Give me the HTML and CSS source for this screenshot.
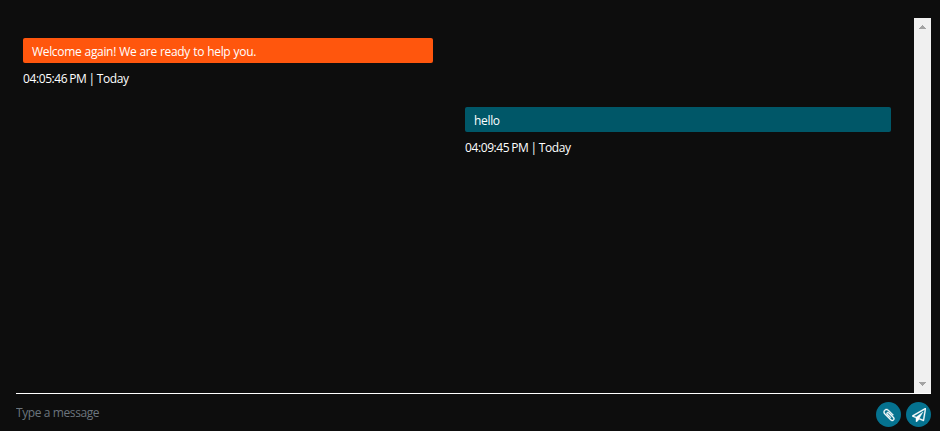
FILE: index.html
```html
<!DOCTYPE html>
<html lang="en">
<head>
<meta charset="utf-8">
<title>Chat</title>
<link rel="stylesheet" href="styles.css">
</head>
<body>
<main class="chat">
  <section class="history">
    <div class="messages">
      <article class="message incoming">
        <p class="bubble">Welcome again! We are ready to help you.</p>
        <time class="time">04:05:46 PM | Today</time>
      </article>
      <article class="message outgoing">
        <p class="bubble">hello</p>
        <time class="time">04:09:45 PM | Today</time>
      </article>
    </div>
    <div class="scrollbar">
      <svg width="7" height="4" viewBox="0 0 7 4" shape-rendering="crispEdges"><path d="M3 0h1v1h1v1h1v1h1v1H0V3h1V2h1V1h1z"/></svg>
      <svg width="7" height="4" viewBox="0 0 7 4" shape-rendering="crispEdges"><path d="M0 0h7v1H6v1H5v1H4v1H3V3H2V2H1V1H0z"/></svg>
    </div>
  </section>
  <form class="composer">
    <input class="field" type="text" placeholder="Type a message">
    <button class="action" type="button" aria-label="Attach">
      <svg width="14" height="14" viewBox="0 0 1792 1792"><path d="M1596 1385q0 117-79 196t-196 79q-135 0-235-100l-777-776q-113-115-113-271 0-159 110-270t269-111q158 0 273 113l605 606q10 10 10 22 0 16-30.500 46.500t-46.500 30.500q-13 0-23-10l-606-607q-79-77-181-77-106 0-179 75t-73 181q0 105 76 181l776 777q63 63 145 63 64 0 106-42t42-106q0-82-63-145l-581-581q-26-24-60-24-29 0-48 19t-19 48q0 32 25 59l410 410q10 10 10 22 0 16-31 47t-47 31q-12 0-22-10l-410-410q-63-61-63-149 0-82 57-139t139-57q88 0 149 63l581 581q100 98 100 235z"/></svg>
    </button>
    <button class="action" type="button" aria-label="Send">
      <svg width="14" height="14" viewBox="0 0 1792 1792"><path d="M1764 11q33 24 27 64l-256 1536q-5 29-32 45-14 8-31 8-11 0-24-5l-527-215-298 327q-18 21-47 21-14 0-23-4-19-7-30-23.500t-11-36.500v-452l-472-193q-37-14-40-55-3-39 32-59l1664-960q35-21 68 2zm-342 1499l221-1323-1434 827 336 137 863-639-478 797z"/></svg>
    </button>
  </form>
</main>
</body>
</html>
```
FILE: styles.css
```css
* { box-sizing: border-box; }
body {
  margin: 0;
  background: #0d0d0d;
  color: #fff;
  font: 12px/17px "Open Sans", "Noto Sans", sans-serif;
  letter-spacing: -0.33px;
  word-spacing: 0.4px;
  overflow: hidden;
}
.chat { height: 431px; padding: 18px 9px 0 16px; }
.history {
  display: flex;
  height: 376px;
  border-bottom: 1px solid #fff;
}
.messages { flex: 1; padding: 20px 23px 0 7px; }
.message { display: flex; flex-direction: column; margin-bottom: 20px; }
.incoming { width: 410px; }
.outgoing { width: 426px; margin-left: auto; }
.bubble {
  height: 25px;
  margin: 0 0 7px;
  padding: 5px 9px 3px;
  border-radius: 2px;
}
.incoming .bubble { background: #ff560d; }
.outgoing .bubble { background: #005768; }
.time { height: 17px; letter-spacing: -0.4px; word-spacing: -0.7px; }
.scrollbar {
  display: flex;
  flex-direction: column;
  justify-content: space-between;
  align-items: center;
  width: 17px;
  padding: 7px 0;
  background: #f0f0f0;
  fill: #a3a3a3;
}
.composer { display: flex; gap: 5px; padding-top: 8px; }
.field {
  flex: 1;
  height: 20px;
  padding: 0;
  border: 0;
  outline: 0;
  background: transparent;
  color: #fff;
  font: inherit;
  letter-spacing: -0.4px;
}
.field::placeholder { color: #6c757d; opacity: 1; }
.action {
  display: flex;
  align-items: center;
  justify-content: center;
  width: 25px;
  height: 25px;
  padding: 0;
  border: 0;
  border-radius: 50%;
  background: #05728f;
  fill: #fff;
}
.action path { stroke: #fff; stroke-width: 50px; }
```
